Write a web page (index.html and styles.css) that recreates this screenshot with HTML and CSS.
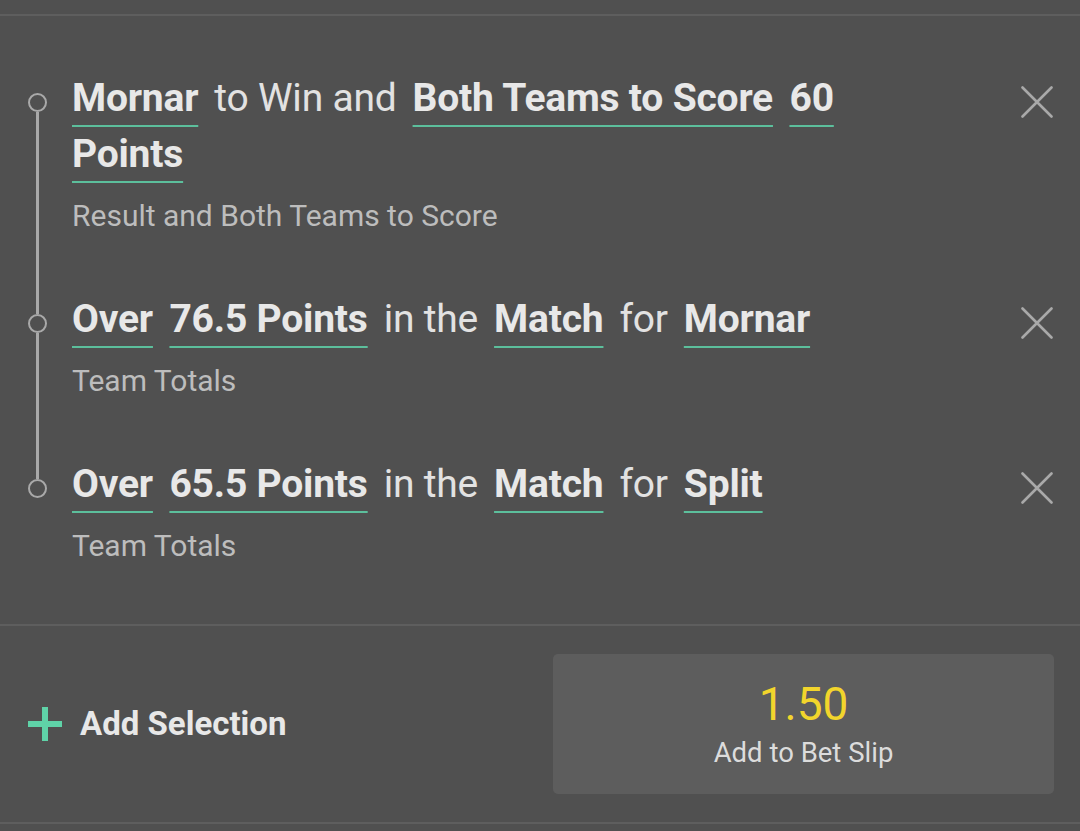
FILE: index.html
```html
<!DOCTYPE html>
<html lang="en">
<head>
<meta charset="utf-8">
<title>Bet Builder</title>
<link rel="stylesheet" href="styles.css">
</head>
<body>
<div class="page">
  <div class="top-space"></div>
  <section class="legs">
    <div class="leg first">
      <div class="rail">
        <span class="seg-top"></span>
        <span class="dot"></span>
        <span class="seg-bottom"></span>
      </div>
      <div class="leg-body">
        <div class="leg-title"><span class="sel">Mornar</span> <span class="txt">to Win and</span> <span class="sel">Both Teams to Score</span> <span class="sel">60</span> <span class="sel">Points</span></div>
        <div class="leg-market">Result and Both Teams to Score</div>
      </div>
      <button class="close" aria-label="Remove">
        <svg width="32" height="32" viewBox="0 0 32 32"><path d="M1.5 1.5 L30.5 30.5 M30.5 1.5 L1.5 30.5" stroke="#a9a9a9" stroke-width="2.6" stroke-linecap="round" fill="none"/></svg>
      </button>
    </div>
    <div class="leg">
      <div class="rail">
        <span class="seg-top"></span>
        <span class="dot"></span>
        <span class="seg-bottom"></span>
      </div>
      <div class="leg-body">
        <div class="leg-title"><span class="sel">Over</span> <span class="sel">76.5 Points</span> <span class="txt">in the</span> <span class="sel">Match</span> <span class="txt">for</span> <span class="sel">Mornar</span></div>
        <div class="leg-market">Team Totals</div>
      </div>
      <button class="close" aria-label="Remove">
        <svg width="32" height="32" viewBox="0 0 32 32"><path d="M1.5 1.5 L30.5 30.5 M30.5 1.5 L1.5 30.5" stroke="#a9a9a9" stroke-width="2.6" stroke-linecap="round" fill="none"/></svg>
      </button>
    </div>
    <div class="leg last">
      <div class="rail">
        <span class="seg-top"></span>
        <span class="dot"></span>
        <span class="seg-bottom"></span>
      </div>
      <div class="leg-body">
        <div class="leg-title"><span class="sel">Over</span> <span class="sel">65.5 Points</span> <span class="txt">in the</span> <span class="sel">Match</span> <span class="txt">for</span> <span class="sel">Split</span></div>
        <div class="leg-market">Team Totals</div>
      </div>
      <button class="close" aria-label="Remove">
        <svg width="32" height="32" viewBox="0 0 32 32"><path d="M1.5 1.5 L30.5 30.5 M30.5 1.5 L1.5 30.5" stroke="#a9a9a9" stroke-width="2.6" stroke-linecap="round" fill="none"/></svg>
      </button>
    </div>
  </section>
  <footer class="actions">
    <button class="add-selection">
      <span class="plus"></span>
      <span class="add-label">Add Selection</span>
    </button>
    <button class="add-slip">
      <span class="odds">1.50</span>
      <span class="slip-label">Add to Bet Slip</span>
    </button>
  </footer>
  <div class="bottom-space"></div>
</div>
</body>
</html>
```

FILE: styles.css
```css
html, body {
  margin: 0;
  padding: 0;
  background: #505050;
}

body {
  font-family: Roboto, "Liberation Sans", Arial, sans-serif;
  color: #e6e6e6;
  width: 1080px;
  height: 831px;
  overflow: hidden;
}

.page {
  display: flex;
  flex-direction: column;
}

.top-space {
  height: 14px;
  border-bottom: 2px solid #5e5e5e;
}

.legs {
  display: flex;
  flex-direction: column;
  padding: 54px 0 0 0;
  border-bottom: 2px solid #5e5e5e;
}

.leg {
  display: flex;
  align-items: stretch;
}

.rail {
  width: 19px;
  margin: 0 21.5px 0 28px;
  display: flex;
  flex-direction: column;
  align-items: center;
}

.seg-top {
  display: block;
  width: 2.5px;
  height: 23px;
  background: #a9a9a9;
}

.first .seg-top {
  background: transparent;
}

.dot {
  display: block;
  box-sizing: border-box;
  width: 19px;
  height: 19px;
  border: 2.5px solid #a9a9a9;
  border-radius: 50%;
}

.seg-bottom {
  display: block;
  width: 2.5px;
  flex: 1;
  background: #a9a9a9;
}

.last .seg-bottom {
  background: transparent;
}

.leg-body {
  flex: 1;
  padding: 0 60px 57px 0;
  min-width: 0;
}

.last .leg-body {
  padding-bottom: 60px;
}

.leg-title {
  font-size: 39px;
  letter-spacing: -0.2px;
  line-height: 56px;
  font-weight: 400;
  color: #e2e2e2;
}

.txt {
  margin: 0 3px;
}

.sel {
  font-weight: 700;
  color: #e8e8e8;
  margin: 0 3.5px;
  text-decoration: underline;
  text-decoration-color: #5cbf9c;
  text-decoration-thickness: 2px;
  text-underline-offset: 14px;
}

.leg-market {
  margin-top: 16px;
  margin-left: 3.5px;
  font-size: 30px;
  line-height: 36px;
  color: #bdbdbd;
}

.close {
  width: 86px;
  flex: none;
  background: none;
  border: 0;
  padding: 16px 0 0 0;
  display: flex;
  justify-content: center;
  align-items: flex-start;
  cursor: pointer;
}

.actions {
  display: flex;
  align-items: center;
  justify-content: space-between;
  padding: 28px 26px 28px 28px;
  border-bottom: 2px solid #5e5e5e;
}

.add-selection {
  display: flex;
  align-items: center;
  background: none;
  border: 0;
  padding: 0;
  font-family: inherit;
  cursor: pointer;
}

.plus {
  width: 34px;
  height: 34px;
  margin-right: 18px;
  background:
    linear-gradient(#5fd3a8, #5fd3a8) center / 34px 6px no-repeat,
    linear-gradient(#5fd3a8, #5fd3a8) center / 6px 34px no-repeat;
}

.add-label {
  font-size: 33px;
  font-weight: 700;
  color: #e8e8e8;
  line-height: 40px;
}

.add-slip {
  width: 501px;
  height: 140px;
  background: #5d5d5d;
  border: 0;
  border-radius: 5px;
  display: flex;
  flex-direction: column;
  align-items: center;
  justify-content: center;
  font-family: inherit;
  cursor: pointer;
  padding: 0;
}

.odds {
  font-size: 46px;
  line-height: 50px;
  color: #f2d52c;
}

.slip-label {
  margin-top: 7px;
  font-size: 27.5px;
  line-height: 34px;
  color: #dcdcdc;
}

.bottom-space {
  height: 7px;
}
```
